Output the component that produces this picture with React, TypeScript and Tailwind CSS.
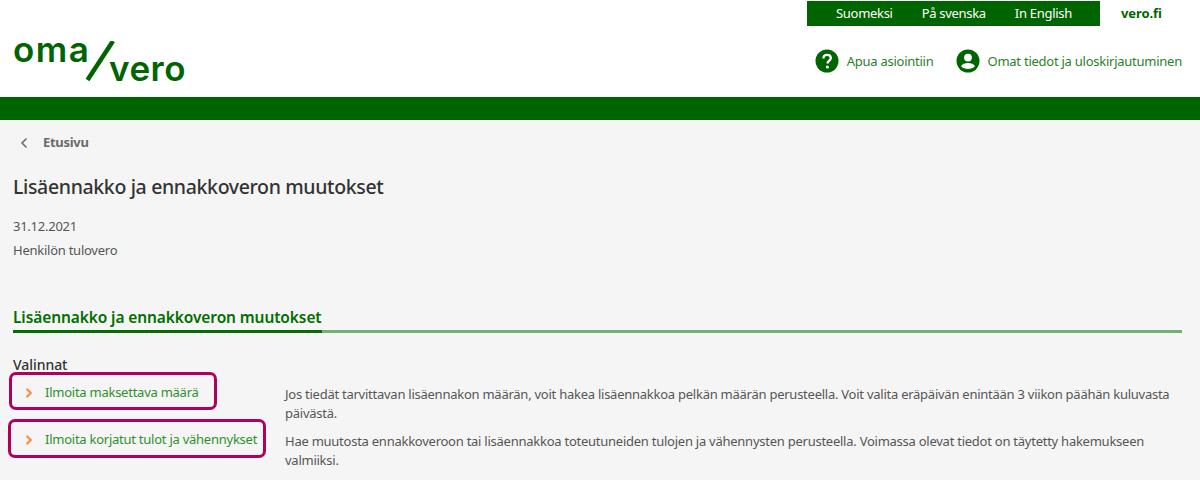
import { ChevronLeft, ChevronRight } from "lucide-react";

const FONT = "font-['Noto_Sans',sans-serif]";

const LANGUAGES = ["Suomeksi", "På svenska", "In English"];

const CHOICES = [
    {
        label: "Ilmoita maksettava määrä",
        box: "w-[208px] h-[38px] ml-[9px] pl-[10px]",
        text: "Jos tiedät tarvittavan lisäennakon määrän, voit hakea lisäennakkoa pelkän määrän perusteella. Voit valita eräpäivän enintään 3 viikon päähän kuluvasta päivästä.",
    },
    {
        label: "Ilmoita korjatut tulot ja vähennykset",
        box: "w-[258px] h-[39px] ml-[8px] pl-[11px]",
        text: "Hae muutosta ennakkoveroon tai lisäennakkoa toteutuneiden tulojen ja vähennysten perusteella. Voimassa olevat tiedot on täytetty hakemukseen valmiiksi.",
    },
];

const Logo = () => (
    <div className="flex h-[42px] w-[174px] font-['Inter',sans-serif] text-[#006400]">
        <span className="mt-[-7px] h-[30px] w-[72px] text-[35px] leading-[30px] font-semibold tracking-[1.5px]">oma</span>
        <svg className="h-[42px] w-[30px] shrink-0" viewBox="0 0 30 42">
            <path d="M28 0 2.500 39" stroke="#006400" strokeWidth="4.500" fill="none" />
        </svg>
        <span className="mt-[12px] ml-[-6px] h-[30px] text-[35px] leading-[30px] font-semibold tracking-[0.5px]">vero</span>
    </div>
);

const HelpIcon = () => (
    <svg className="h-[24px] w-[24px]" viewBox="0 0 24 24">
        <circle cx="12" cy="12" r="11.500" fill="#006400" />
        <path d="M8.400 9.400c0-2.200 1.600-3.600 3.700-3.600 2.200 0 3.700 1.300 3.700 3.200 0 1.500-.8 2.300-1.900 3-.9.6-1.200 1-1.200 2v.4" stroke="#fff" strokeWidth="2.300" fill="none" />
        <circle cx="12.400" cy="18" r="1.500" fill="#fff" />
    </svg>
);

const UserIcon = () => (
    <svg className="h-[24px] w-[24px]" viewBox="0 0 24 24">
        <circle cx="12" cy="12" r="11.500" fill="#006400" />
        <circle cx="12" cy="8.600" r="3.900" fill="#fff" />
        <path d="M5 17.200c1.200-2.200 4-3.200 7-3.200s5.800 1 7 3.200c-1.600 1.800-4.200 2.800-7 2.800s-5.400-1-7-2.800z" fill="#fff" />
    </svg>
);

const App = () => {
    return (
        <div className={`h-[480px] w-[1200px] overflow-hidden bg-[#f5f5f5] ${FONT}`}>
            <header className="h-[97px] bg-white">
                <div className="flex h-[27px] pt-px">
                    <div className="ml-[807px] flex h-[25px] w-[293px] items-center bg-[#006400] pl-[29px] text-[13px] tracking-[-0.3px] whitespace-nowrap text-white">
                        {LANGUAGES.map((lang) => (
                            <span className="mr-[29px]" key={lang}>
                                {lang}
                            </span>
                        ))}
                    </div>
                    <span className="ml-[21px] text-[13px] leading-[25px] font-bold tracking-[-0.1px] text-[#006400]">vero.fi</span>
                </div>
                <div className="flex items-start justify-between pr-[18px] pl-[13px]">
                    <div className="pt-[14px]">
                        <Logo />
                    </div>
                    <div className="flex items-center pt-[22px] text-[13px] tracking-[-0.25px] text-[#2b7f2b]">
                        <HelpIcon />
                        <span className="mt-px ml-[8px]">Apua asiointiin</span>
                        <span className="ml-[22px]">
                            <UserIcon />
                        </span>
                        <span className="mt-px ml-[8px]">Omat tiedot ja uloskirjautuminen</span>
                    </div>
                </div>
            </header>

            <div className="h-[23px] bg-[#006400]" />

            <main>
                <div className="flex h-[45px] items-center pl-[16px] text-[13px] font-bold tracking-[-0.3px] text-[#6b6b6b]">
                    <ChevronLeft className="h-[16px] w-[16px]" strokeWidth={2.5} />
                    <span className="ml-[11px]">Etusivu</span>
                </div>

                <div className="px-[13px] text-[#333]">
                    <h1 className="mt-[6px] h-[32px] text-[19.5px] leading-[32px] font-medium tracking-[-0.35px]">
                        Lisäennakko ja ennakkoveron muutokset
                    </h1>
                    <p className="mt-[12px] text-[13px] leading-[23px] tracking-[-0.25px] text-[#555]">31.12.2021</p>
                    <p className="mt-[1px] text-[13px] leading-[23px] tracking-[-0.25px] text-[#555]">Henkilön tulovero</p>
                </div>

                <div className="mt-[44px] mr-[18px] ml-[13px] flex border-b-[3px] border-[#73b073]">
                    <h2 className="mb-[-3px] border-b-[3px] border-[#006e00] pb-[2px] text-[15.5px] leading-[22px] font-semibold tracking-[-0.1px] text-[#006e00]">
                        Lisäennakko ja ennakkoveron muutokset
                    </h2>
                </div>

                <h3 className="mt-[21px] ml-[13px] h-[20px] text-[14px] leading-[22px] font-medium tracking-[-0.05px] text-[#333]">Valinnat</h3>

                <div className="mt-[-2px]">
                    {CHOICES.map((choice) => (
                        <div className="flex h-[47px] items-start" key={choice.label}>
                            <div className="w-[285px] shrink-0">
                                <div className={`flex items-center rounded-[7px] border-[3px] border-[#b0005c] pt-[3px] text-[13px] tracking-[-0.25px] whitespace-nowrap text-[#2f8f2f] ${choice.box}`}>
                                    <ChevronRight className="h-[14px] w-[14px] shrink-0 text-[#f7923a]" strokeWidth={4} />
                                    <span className="ml-[9px]">{choice.label}</span>
                                </div>
                            </div>
                            <p className="mt-[13px] w-[885px] text-[13px] leading-[18.5px] tracking-[-0.25px] text-[#555]">{choice.text}</p>
                        </div>
                    ))}
                </div>
            </main>
        </div>
    );
};

export default App;
